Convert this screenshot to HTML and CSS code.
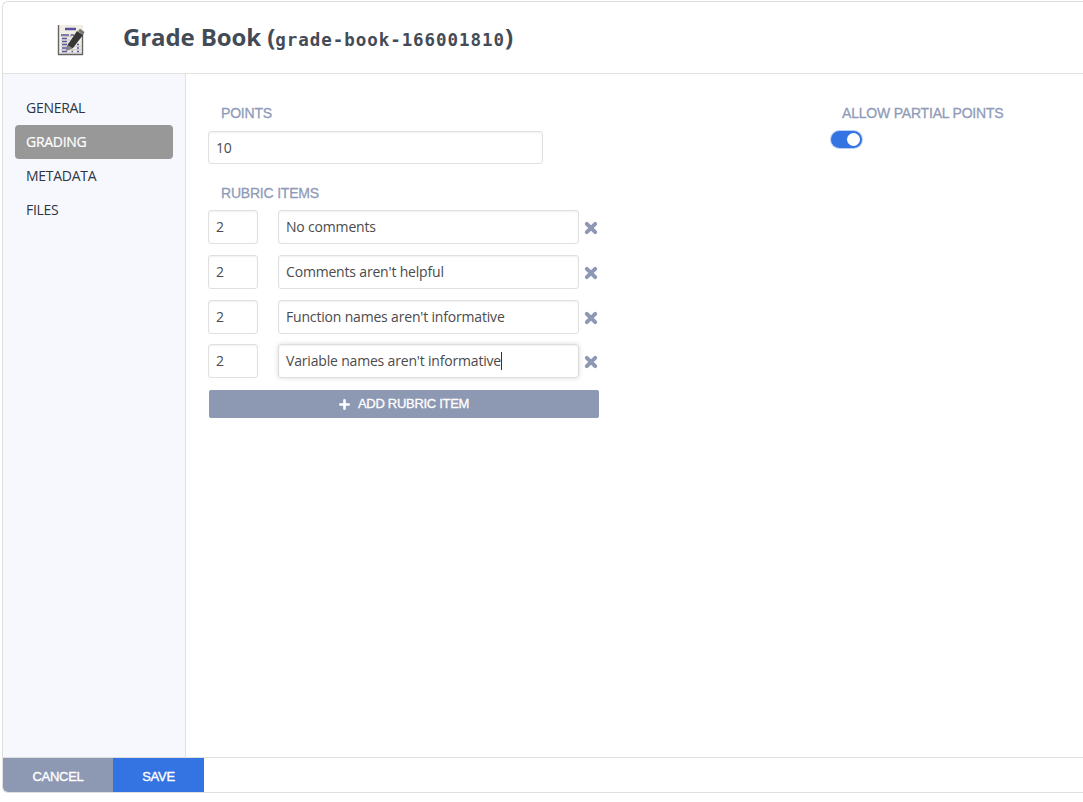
FILE: index.html
```html
<!DOCTYPE html>
<html lang="en">
<head>
<meta charset="utf-8">
<title>Grade Book</title>
<link rel="stylesheet" href="styles.css">
</head>
<body>
<div class="panel">
  <header class="header">
    <svg class="logo" width="28" height="32" viewBox="0 0 28 32">
      <path d="M1 1H26V31H1Z" fill="#f1ede3"/>
      <path d="M1.500 1V30.500H26M25.500 9V31" fill="none" stroke="#646464" stroke-width="1.4"/>
      <path d="M8 5H19" stroke="#5a50a0" stroke-width="2.4"/>
      <path d="M4 11H12M13.500 11H17M5 14.500H10M5 17.500H10M5 20.500H10M5 24H10M5 27.500H10M14.500 27.500H16M20 20.500H22M20 24H22M20 27.500H22" stroke="#5a55a0" stroke-width="1.7"/>
      <path d="M4 12.700H15M4 16H13M4 19H12M4 22.300H24M4 25.800H24M4 29H24" stroke="#b9b6bd" stroke-width=".8"/>
      <path d="M10.500 21L20 7L26 11L16 24L9.500 26.500Z" fill="#363636"/>
      <path d="M10.500 21L15.500 24L9.500 27Z" fill="#858588"/>
      <path d="M21 7L23 4.800L27.500 8L26 11Z" fill="#777"/>
    </svg>
    <h1 class="title">Grade Book (<code class="slug">grade-book-166001810</code>)</h1>
  </header>
  <div class="body">
    <nav class="sidebar">
      <a class="tab">GENERAL</a>
      <a class="tab active">GRADING</a>
      <a class="tab">METADATA</a>
      <a class="tab">FILES</a>
    </nav>
    <main class="content">
      <section class="grading">
        <div class="label">POINTS</div>
        <div class="input points">10</div>
        <div class="label rubric-label">RUBRIC ITEMS</div>
        <div class="rubric">
          <div class="row"><div class="input score">2</div><div class="input desc">No comments</div><svg class="remove" viewBox="0 0 14 14"><path d="M2.800 2.800L11.200 11.200M11.200 2.800L2.800 11.200"/></svg></div>
          <div class="row"><div class="input score">2</div><div class="input desc">Comments aren't helpful</div><svg class="remove" viewBox="0 0 14 14"><path d="M2.800 2.800L11.200 11.200M11.200 2.800L2.800 11.200"/></svg></div>
          <div class="row"><div class="input score">2</div><div class="input desc">Function names aren't informative</div><svg class="remove" viewBox="0 0 14 14"><path d="M2.800 2.800L11.200 11.200M11.200 2.800L2.800 11.200"/></svg></div>
          <div class="row"><div class="input score">2</div><div class="input desc focused">Variable names aren't informative<i class="caret"></i></div><svg class="remove" viewBox="0 0 14 14"><path d="M2.800 2.800L11.200 11.200M11.200 2.800L2.800 11.200"/></svg></div>
        </div>
        <div class="add"><svg class="plus" width="11" height="11" viewBox="0 0 11 11"><path d="M5.500 1.300V9.700M1.300 5.500H9.700"/></svg><span>ADD RUBRIC ITEM</span></div>
      </section>
      <section class="partial">
        <div class="label">ALLOW PARTIAL POINTS</div>
        <div class="toggle"><i class="knob"></i></div>
      </section>
    </main>
  </div>
  <footer class="footer">
    <div class="btn cancel">CANCEL</div>
    <div class="btn save">SAVE</div>
  </footer>
</div>
</body>
</html>
```
FILE: styles.css
```css
* { box-sizing: border-box; }
body { margin: 0; background: #fff; overflow: hidden; font-family: "Open Sans", "Noto Sans", sans-serif; }
.panel {
  display: flex; flex-direction: column;
  margin: 1px 0 0 2px; height: 792px;
  border: 1px solid #dfdfdf; border-right: 0;
  border-radius: 6px 0 0 6px; overflow: hidden;
}
.header { display: flex; height: 72px; flex: none; border-bottom: 1px solid #e1e1e1; }
.logo { margin: 22px 0 0 54px; flex: none; }
.title {
  margin: 18px 0 0 38px; white-space: nowrap;
  font-size: 24px; line-height: 34px; font-weight: 700; color: #434b57; letter-spacing: -.1px;
}
.slug { font: 700 17.5px "DejaVu Sans Mono", monospace; letter-spacing: .95px; }
.body { display: flex; flex: 1; min-height: 0; }
.sidebar {
  width: 183px; flex: none; padding: 17px 12px 0 12px;
  background: #f7f8fd; border-right: 1px solid #e1e1e1;
}
.tab {
  display: block; height: 34px; padding-left: 11px;
  font-size: 14px; line-height: 34px; color: #2d3645; border-radius: 4px;
  letter-spacing: -.28px;
}
.tab.active { background: #989898; color: #fff; -webkit-text-stroke: .2px #fff; }
.content { display: flex; flex: 1; padding-top: 30px; }
.grading { width: 391px; margin-left: 22px; }
.partial { margin-left: 230px; }
.label {
  padding-left: 13px; height: 18px; white-space: nowrap;
  font: 14px/18px "Liberation Sans", Arial, sans-serif; color: #8f9bb8;
  letter-spacing: -.2px; -webkit-text-stroke: .3px #8f9bb8;
}
.input {
  height: 34px; padding-left: 7px; border: 1px solid #e0e0e0; border-radius: 3px;
  box-shadow: inset 0 1px 2px rgba(0, 0, 0, .06);
  font-size: 14px; line-height: 31px; letter-spacing: -.18px; color: #4b4b4b; white-space: nowrap;
}
.points { width: 335px; margin-top: 9px; height: 33px; }
.rubric-label { margin-top: 20px; }
.rubric { display: flex; flex-direction: column; gap: 10.8px; margin-top: 8px; }
.row { display: flex; align-items: center; height: 34px; }
.score { width: 50px; }
.desc { display: flex; width: 301px; margin-left: 20px; }
.focused { border-color: #ddd; box-shadow: 0 0 5px rgba(0, 0, 0, .15), inset 0 1px 2px rgba(0, 0, 0, .06); }
.caret { width: 1px; height: 18px; margin-top: 7px; background: #333; }
.remove { width: 14px; height: 14px; margin: 2px 0 0 5px; }
.remove path { stroke: #8d98b5; stroke-width: 3.9; stroke-linecap: round; }
.add {
  display: flex; align-items: center; justify-content: center; gap: 8px;
  width: 390px; height: 28px; margin: 11.600px 0 0 1px; padding-bottom: 1px; border-radius: 2px;
  background: #8d98b3; color: #fff; font: 13px "Liberation Sans", Arial, sans-serif;
  letter-spacing: -.3px; -webkit-text-stroke: .3px #fff;
}
.plus { margin-top: 3px; }
.plus path { stroke: #fff; stroke-width: 2.6; stroke-linecap: round; }
.toggle {
  display: flex; align-items: center; justify-content: flex-end;
  width: 31px; height: 17px; margin: 9px 0 0 2px; padding-right: 2px;
  border-radius: 9px; background: #3473e2; box-shadow: 0 0 0 1px #b9cff5;
}
.knob { width: 13px; height: 13px; border-radius: 50%; background: #fff; }
.footer { display: flex; height: 35px; flex: none; border-top: 1px solid #dfdfdf; }
.btn {
  display: flex; align-items: center; justify-content: center; padding-top: 2px;
  font: 13px "Liberation Sans", Arial, sans-serif; color: #fff;
  letter-spacing: -.3px; -webkit-text-stroke: .35px #fff;
}
.cancel { width: 110px; background: #8d98b3; }
.save { width: 91px; background: #3473e2; }
```
